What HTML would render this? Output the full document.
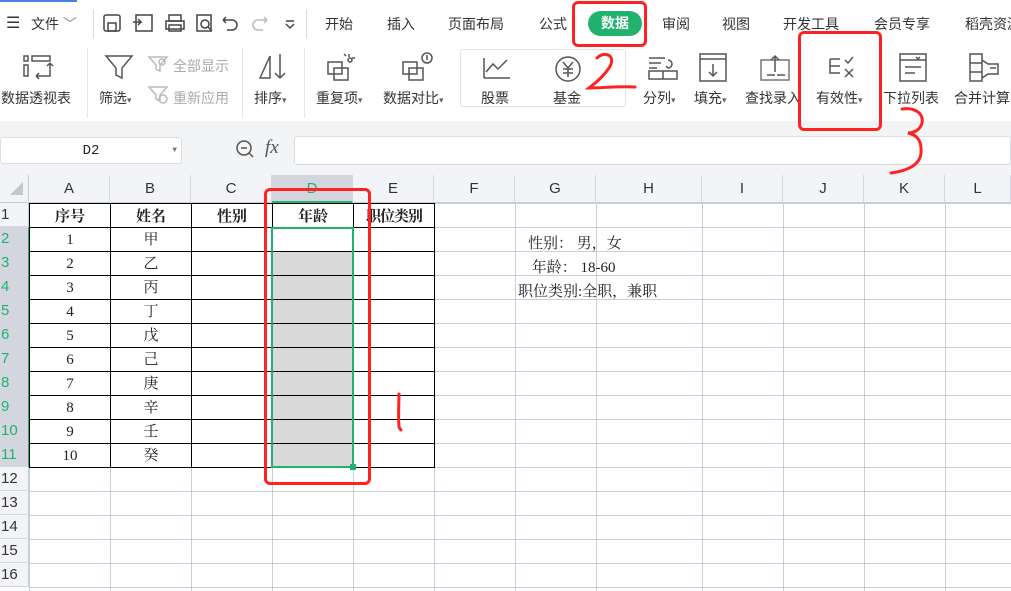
<!DOCTYPE html>
<html><head><meta charset="utf-8"><style>
*{margin:0;padding:0;box-sizing:border-box}
body{width:1011px;height:591px;overflow:hidden;background:#fff;font-family:"Liberation Sans","Noto Sans CJK SC",sans-serif;font-size:14px;color:#222;position:relative}
.a{position:absolute;white-space:nowrap}
.top{left:0;top:0;width:1011px;height:120px;background:#fff}
.tab{top:14px;font-size:14px;color:#333}
.lbl{font-size:14px;color:#333}
.gray{color:#aaa}
svg{position:absolute}
.fbar{left:0;top:121px;width:1011px;height:54px;background:#f3f4f6}
.col{top:175px;height:28px;background:#f3f4f7;border-right:1px solid #d5d8e0;border-bottom:1px solid #c8ccd6;text-align:center;line-height:28px;font-size:15px;color:#333}
.row{left:0;width:29px;height:24px;background:#f3f4f7;border-bottom:1px solid #d5d8e0;border-right:1px solid #c8ccd6;font-size:15px;line-height:24px;padding-left:1px;color:#333}
.grid{top:203px;height:388px;background-image:linear-gradient(to right,#c9cedb 1px,transparent 1px),linear-gradient(to bottom,#c9cedb 1px,transparent 1px);background-size:81px 24px}
table{position:absolute;left:29px;top:203px;border-collapse:collapse;font-family:"Liberation Serif","Noto Serif CJK SC",serif;font-size:15px}
td{border:1px solid #000;height:24px;width:81px;text-align:center;padding:0;line-height:22px}
th{border:1px solid #000;height:24px;width:81px;font-weight:bold;padding:0;font-size:15px}
.red{border:3px solid #f22;border-radius:6px;position:absolute}
.s{font-family:"Liberation Serif","Noto Serif CJK SC",serif;font-size:15px}
</style></head><body>
<div class="a top"></div>
<div class="a" style="left:0;top:0;width:77px;height:2px;background:#4a7fe0"></div>
<div class="a tab" style="left:6px;top:13px;font-size:16px">☰</div>
<div class="a tab" style="left:31px">文件 <span style="color:#888">﹀</span></div>
<div class="a" style="left:93px;top:10px;width:1px;height:28px;background:#ddd"></div>
<svg style="left:103px;top:13px" width="200" height="22" fill="none" stroke="#444" stroke-width="1.5">
<rect x="1" y="2" width="16" height="16" rx="2"/><rect x="5" y="10" width="8" height="8"/>
<rect x="33" y="2" width="16" height="16"/><path d="M30 9h8l-3-3M38 9l-3 3"/>
<rect x="63" y="8" width="18" height="8"/><rect x="66" y="2" width="12" height="6"/><rect x="66" y="12" width="12" height="6"/>
<rect x="94" y="2" width="14" height="16"/><circle cx="102" cy="11" r="4"/><path d="M105 14l4 4"/>
<path d="M120 7h9a5 5 0 0 1 0 10h-5M120 7l3-3M120 7l3 3"/>
<path stroke="#bbb" d="M164 7h-9a5 5 0 0 0 0 10h5M164 7l-3-3M164 7l-3 3"/>
<path d="M183 8h8M183 11l4 4 4-4"/>
</svg>
<div class="a" style="left:306px;top:10px;width:1px;height:28px;background:#ddd"></div>
<div class="a tab" style="left:325px">开始</div>
<div class="a tab" style="left:387px">插入</div>
<div class="a tab" style="left:448px">页面布局</div>
<div class="a tab" style="left:539px">公式</div>
<div class="a" style="left:588px;top:11px;width:54px;height:25px;border-radius:13px;background:#21b36e;color:#fff;text-align:center;line-height:25px;font-size:14px;font-weight:bold">数据</div>
<div class="a tab" style="left:662px">审阅</div>
<div class="a tab" style="left:722px">视图</div>
<div class="a tab" style="left:783px">开发工具</div>
<div class="a tab" style="left:874px">会员专享</div>
<div class="a tab" style="left:965px">稻壳资源</div>
<svg style="left:0;top:48px" width="1011" height="36" fill="none" stroke="#555" stroke-width="1.5">
<rect x="24" y="8" width="4" height="5"/><rect x="24" y="17" width="4" height="11"/><rect x="32" y="8" width="18" height="5"/><path d="M50 15v13H36M36 28l3-3M36 28l3 3M50 15l-3 3M50 15l3 3"/>
<path d="M106 8h26l-10 12v10l-6-3v-7z"/>
<path stroke="#bbb" d="M149 9h18l-7 8v6l-4-2v-4z"/><circle stroke="#bbb" cx="162" cy="14" r="3"/>
<path d="M260 30l10-22v22zM280 6v24M275 25l5 5 5-5"/>
<rect x="328" y="14" width="14" height="12"/><rect x="334" y="20" width="14" height="12"/><path d="M349 6v3M352 10h3M346 8l-2-2"/><circle cx="350" cy="12" r="2"/>
<rect x="403" y="14" width="14" height="12"/><rect x="409" y="20" width="14" height="12"/><circle cx="427" cy="10" r="5"/><path d="M427 7v5"/>
<path d="M484 30V10M484 30h26M486 24l7-8 5 5 9-9"/>
<circle cx="568" cy="21" r="12"/><path d="M563 14l5 6 5-6M568 20v9M563 21h10M563 25h10"/>
<path d="M649 10h16M649 15h12M649 20h8M668 12a4 4 0 0 1 0 8l-2-2"/><rect x="649" y="23" width="28" height="8"/><path d="M663 23v8"/>
<rect x="700" y="6" width="26" height="27"/><path d="M700 11h26M713 16v12M709 24l4 4 4-4"/>
<rect x="761" y="12" width="28" height="20" stroke="#777"/><path d="M775 24V8M771 12l4-4 4 4M767 27h8M777 27h8"/>
<path d="M830 11h10M830 11v14h10M830 18h10M845 12l3 3 5-6M845 21l8 8M853 21l-8 8"/>
<rect x="900" y="6" width="26" height="27"/><path d="M900 12h26M905 19h16M905 25h10M916 9l2 2 2-2"/>
<rect x="970" y="6" width="12" height="27"/><path d="M970 15h12M970 24h12M982 12l6 4h10v10h-10l-6 4"/><path d="M990 20h6"/>
</svg>
<svg style="left:148px;top:86px" width="22" height="20" fill="none" stroke="#bbb" stroke-width="1.5"><path d="M1 1h18l-7 8v6l-4-2v-4z"/><circle cx="15" cy="13" r="4"/></svg>
<div class="a lbl" style="left:1px;top:88px">数据透视表</div>
<div class="a" style="left:87px;top:48px;width:1px;height:70px;background:#e5e5e5"></div>
<div class="a lbl" style="left:99px;top:88px">筛选<span style="font-size:9px;color:#666">▾</span></div>
<div class="a lbl gray" style="left:173px;top:56px">全部显示</div>
<div class="a lbl gray" style="left:173px;top:88px">重新应用</div>
<div class="a" style="left:242px;top:48px;width:1px;height:70px;background:#e5e5e5"></div>
<div class="a lbl" style="left:254px;top:88px">排序<span style="font-size:9px;color:#666">▾</span></div>
<div class="a" style="left:304px;top:48px;width:1px;height:70px;background:#e5e5e5"></div>
<div class="a lbl" style="left:316px;top:88px">重复项<span style="font-size:9px;color:#666">▾</span></div>
<div class="a lbl" style="left:383px;top:88px">数据对比<span style="font-size:9px;color:#666">▾</span></div>
<div class="a" style="left:460px;top:49px;width:166px;height:58px;border:1px solid #e2e2e2;border-radius:3px"></div>
<div class="a lbl" style="left:481px;top:88px">股票</div>
<div class="a lbl" style="left:553px;top:88px">基金</div>
<div class="a lbl" style="left:643px;top:88px">分列<span style="font-size:9px;color:#666">▾</span></div>
<div class="a lbl" style="left:694px;top:88px">填充<span style="font-size:9px;color:#666">▾</span></div>
<div class="a lbl" style="left:745px;top:88px">查找录入</div>
<div class="a lbl" style="left:816px;top:88px">有效性<span style="font-size:9px;color:#666">▾</span></div>
<div class="a lbl" style="left:883px;top:88px">下拉列表</div>
<div class="a lbl" style="left:954px;top:88px">合并计算</div>
<div class="a fbar"></div>
<div class="a" style="left:0;top:137px;width:182px;height:27px;background:#fff;border:1px solid #dcdde0;border-radius:3px;text-align:center;line-height:26px;font-family:'Liberation Mono',monospace;font-size:14px">D2<span style="position:absolute;right:4px;font-size:8px;color:#777">▼</span></div>
<svg style="left:235px;top:139px" width="20" height="22" fill="none" stroke="#555" stroke-width="1.5"><circle cx="9" cy="9" r="7"/><path d="M6 9h6M14 14l4 4"/></svg>
<div class="a" style="left:265px;top:137px;font-family:'Liberation Serif',serif;font-style:italic;font-size:19px;color:#555">fx</div>
<div class="a" style="left:294px;top:136px;width:717px;height:29px;background:#fff;border:1px solid #dcdde0;border-radius:3px"></div>
<div class="a" style="left:0;top:175px;width:29px;height:28px;background:#f3f4f7;border-right:1px solid #c8ccd6;border-bottom:1px solid #c8ccd6"></div>
<div class="a" style="left:10px;top:182px;width:0;height:0;border-left:13px solid transparent;border-bottom:13px solid #c4c6cc"></div>
<div class="a col" style="left:29px;width:81px">A</div>
<div class="a col" style="left:110px;width:81px">B</div>
<div class="a col" style="left:191px;width:81px">C</div>
<div class="a col" style="left:272px;width:81px;background:#d3d6de;color:#21b36e;border-bottom:2px solid #21b36e">D</div>
<div class="a col" style="left:353px;width:81px">E</div>
<div class="a col" style="left:434px;width:81px">F</div>
<div class="a col" style="left:515px;width:81px">G</div>
<div class="a col" style="left:596px;width:106px">H</div>
<div class="a col" style="left:702px;width:81px">I</div>
<div class="a col" style="left:783px;width:81px">J</div>
<div class="a col" style="left:864px;width:81px">K</div>
<div class="a col" style="left:945px;width:66px">L</div>
<div class="a row" style="top:203px">1</div>
<div class="a row" style="top:227px;background:#d3d6de;color:#21b36e">2</div>
<div class="a row" style="top:251px;background:#d3d6de;color:#21b36e">3</div>
<div class="a row" style="top:275px;background:#d3d6de;color:#21b36e">4</div>
<div class="a row" style="top:299px;background:#d3d6de;color:#21b36e">5</div>
<div class="a row" style="top:323px;background:#d3d6de;color:#21b36e">6</div>
<div class="a row" style="top:347px;background:#d3d6de;color:#21b36e">7</div>
<div class="a row" style="top:371px;background:#d3d6de;color:#21b36e">8</div>
<div class="a row" style="top:395px;background:#d3d6de;color:#21b36e">9</div>
<div class="a row" style="top:419px;background:#d3d6de;color:#21b36e">10</div>
<div class="a row" style="top:443px;background:#d3d6de;color:#21b36e">11</div>
<div class="a row" style="top:467px">12</div>
<div class="a row" style="top:491px">13</div>
<div class="a row" style="top:515px">14</div>
<div class="a row" style="top:539px">15</div>
<div class="a row" style="top:563px">16</div>
<div class="a" style="left:28px;top:227px;width:2px;height:240px;background:#21b36e"></div>
<div class="a grid" style="left:29px;width:567px"></div>
<div class="a" style="left:596px;top:203px;width:107px;height:388px;border-left:1px solid #c9cedb;border-right:1px solid #c9cedb;background-image:linear-gradient(to bottom,#c9cedb 1px,transparent 1px);background-size:106px 24px"></div>
<div class="a grid" style="left:702px;width:309px"></div>
<div class="a" style="left:273px;top:251px;width:80px;height:216px;background:#d9d9d9"></div>
<table>
<tr><th>序号</th><th>姓名</th><th>性别</th><th>年龄</th><th style="white-space:nowrap;letter-spacing:-1px">职位类别</th></tr>
<tr><td>1</td><td>甲</td><td></td><td></td><td></td></tr>
<tr><td>2</td><td>乙</td><td></td><td style="background:#d9d9d9"></td><td></td></tr>
<tr><td>3</td><td>丙</td><td></td><td style="background:#d9d9d9"></td><td></td></tr>
<tr><td>4</td><td>丁</td><td></td><td style="background:#d9d9d9"></td><td></td></tr>
<tr><td>5</td><td>戊</td><td></td><td style="background:#d9d9d9"></td><td></td></tr>
<tr><td>6</td><td>己</td><td></td><td style="background:#d9d9d9"></td><td></td></tr>
<tr><td>7</td><td>庚</td><td></td><td style="background:#d9d9d9"></td><td></td></tr>
<tr><td>8</td><td>辛</td><td></td><td style="background:#d9d9d9"></td><td></td></tr>
<tr><td>9</td><td>壬</td><td></td><td style="background:#d9d9d9"></td><td></td></tr>
<tr><td>10</td><td>癸</td><td></td><td style="background:#d9d9d9"></td><td></td></tr>
</table>
<div class="a" style="left:271px;top:227px;width:83px;height:241px;border:2px solid #21b36e"></div>
<div class="a" style="left:350px;top:464px;width:6px;height:6px;background:#21b36e"></div>
<div class="a s" style="left:528px;top:232px">性别：&nbsp;男，女</div>
<div class="a s" style="left:528px;top:256px">&nbsp;年龄：&nbsp;18-60</div>
<div class="a s" style="left:518px;top:280px">职位类别:全职，兼职</div>
<div class="red" style="left:572px;top:1px;width:75px;height:46px"></div>
<div class="red" style="left:798px;top:31px;width:84px;height:100px"></div>
<div class="red" style="left:264px;top:188px;width:107px;height:297px"></div>
<svg style="left:580px;top:50px" width="60" height="42" fill="none" stroke="#f22" stroke-width="3" stroke-linecap="round"><path d="M17 8c8-8 20-2 12 10-4 6-12 14-20 20 12 0 30-2 46-1"/></svg>
<svg style="left:880px;top:105px" width="50" height="70" fill="none" stroke="#f22" stroke-width="3" stroke-linecap="round"><path d="M22 4c12-2 22 4 20 14-2 8-10 10-14 10 8 2 14 6 13 20-1 12-14 18-30 20"/></svg>
<svg style="left:390px;top:390px" width="20" height="50" fill="none" stroke="#f22" stroke-width="3" stroke-linecap="round"><path d="M9 4c0 10-1 22 0 32 0 2 1 3 2 4"/></svg>
</body></html>
